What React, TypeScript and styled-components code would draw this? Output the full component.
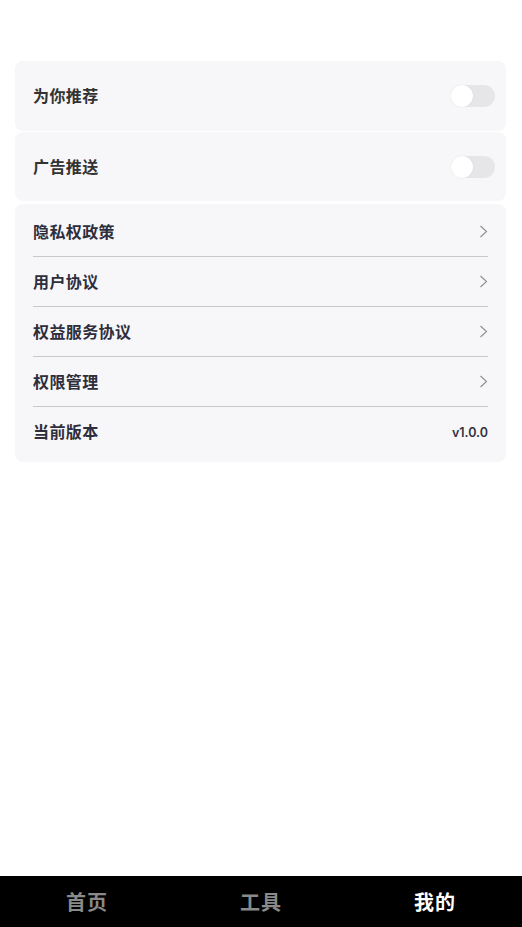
import * as React from 'react';
import styled, { createGlobalStyle } from 'styled-components';

const GlobalStyle = createGlobalStyle`
  html, body {
    margin: 0;
    padding: 0;
    background: #ffffff;
  }
  body {
    font-family: "Noto Sans CJK SC", "Noto Sans", sans-serif;
  }
`;

const Page = styled.div`
  display: flex;
  flex-direction: column;
  min-height: 100vh;
  background: #ffffff;
`;

const Content = styled.div`
  flex-grow: 1;
  padding: 61px 16px 0 15px;
  display: flex;
  flex-direction: column;
`;

const Card = styled.div<{ $gap: number; $height?: number }>`
  background: #f7f7f9;
  border-radius: 8px;
  margin-bottom: ${(p) => p.$gap}px;
  ${(p) => (p.$height ? `height: ${p.$height}px;` : '')}
`;

const SwitchRow = styled.div`
  height: 100%;
  display: flex;
  align-items: center;
  justify-content: space-between;
  padding: 0 11px 0 18px;
`;

const ListCard = styled(Card)`
  padding: 3px 18px 5px 18px;
`;

const Row = styled.div<{ $last?: boolean }>`
  height: ${(p) => (p.$last ? 50 : 49)}px;
  display: flex;
  align-items: center;
  justify-content: space-between;
  border-bottom: ${(p) => (p.$last ? 'none' : '1px solid #c9c9cd')};
`;

const Label = styled.span<{ $dark?: boolean }>`
  font-size: 16px;
  line-height: 16px;
  font-weight: 700;
  letter-spacing: 0.4px;
  padding-bottom: 2px;
  color: ${(p) => (p.$dark ? '#333333' : '#2e2e3c')};
`;

const Version = styled.span`
  font-family: Inter, "Noto Sans", sans-serif;
  font-size: 12.5px;
  font-weight: 600;
  color: #333340;
`;

const Track = styled.div<{ $on: boolean }>`
  width: 44px;
  height: 22px;
  border-radius: 11px;
  background: ${(p) => (p.$on ? '#3478f6' : '#e6e6e8')};
  display: flex;
  justify-content: ${(p) => (p.$on ? 'flex-end' : 'flex-start')};
  cursor: pointer;
`;

const Knob = styled.div`
  width: 22px;
  height: 22px;
  border-radius: 50%;
  background: #ffffff;
  box-shadow: 0 0 2px rgba(0, 0, 0, 0.08);
`;

const TabBar = styled.nav`
  height: 51px;
  background: #000000;
  display: grid;
  grid-template-columns: repeat(3, 1fr);
  align-items: center;
`;

const Tab = styled.div<{ $active?: boolean }>`
  text-align: center;
  font-size: 20px;
  line-height: 20px;
  font-weight: 700;
  letter-spacing: 1px;
  color: ${(p) => (p.$active ? '#ffffff' : '#8a8a8a')};
`;

function Toggle() {
  const [on, setOn] = React.useState(false);
  return (
    <Track $on={on} onClick={() => setOn(!on)}>
      <Knob />
    </Track>
  );
}

function Chevron() {
  return (
    <svg width="9" height="13" viewBox="0 0 9 13">
      <path d="M1.5 1 L7.5 6.5 L1.5 12" fill="none" stroke="#8c8c94" strokeWidth="1.1" />
    </svg>
  );
}

const links = ['隐私权政策', '用户协议', '权益服务协议', '权限管理'];

export default function App() {
  return (
    <Page>
      <GlobalStyle />
      <Content>
        <Card $gap={1} $height={70}>
          <SwitchRow>
            <Label $dark>为你推荐</Label>
            <Toggle />
          </SwitchRow>
        </Card>
        <Card $gap={3} $height={69}>
          <SwitchRow>
            <Label $dark>广告推送</Label>
            <Toggle />
          </SwitchRow>
        </Card>
        <ListCard $gap={0}>
          {links.map((l) => (
            <Row key={l}>
              <Label>{l}</Label>
              <Chevron />
            </Row>
          ))}
          <Row $last>
            <Label>当前版本</Label>
            <Version>v1.0.0</Version>
          </Row>
        </ListCard>
      </Content>
      <TabBar>
        <Tab>首页</Tab>
        <Tab>工具</Tab>
        <Tab $active>我的</Tab>
      </TabBar>
    </Page>
  );
}
